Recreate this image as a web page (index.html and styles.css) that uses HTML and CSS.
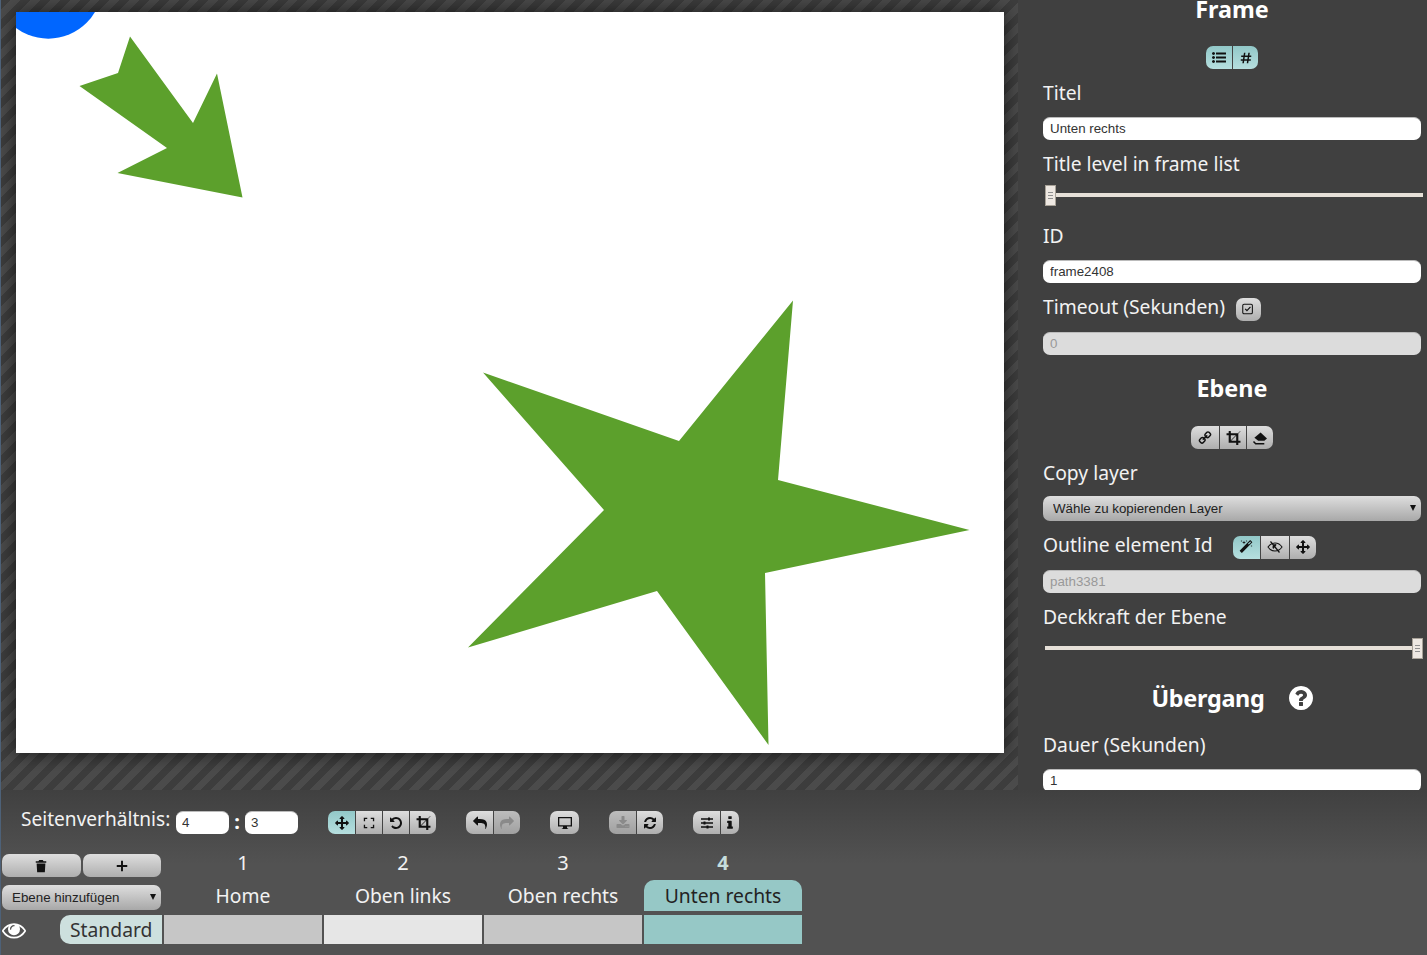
FILE: index.html
```html
<!DOCTYPE html>
<html lang="de">
<head>
    <meta charset="UTF-8">
    <title>Frame Editor</title>
    <link rel="stylesheet" href="styles.css">
</head>
<body>
    <svg class="sprite" xmlns="http://www.w3.org/2000/svg">
        <symbol id="i-list" viewBox="0 0 1792 1792"><path d="M384 1344q0 80-56 136t-136 56-136-56-56-136 56-136 136-56 136 56 56 136zm0-512q0 80-56 136t-136 56-136-56-56-136 56-136 136-56 136 56 56 136zm1408 416v192q0 13-9.5 22.5t-22.5 9.5h-1216q-13 0-22.5-9.5t-9.5-22.5v-192q0-13 9.5-22.5t22.5-9.5h1216q13 0 22.5 9.5t9.5 22.5zm-1408-928q0 80-56 136t-136 56-136-56-56-136 56-136 136-56 136 56 56 136zm1408 416v192q0 13-9.5 22.5t-22.5 9.5h-1216q-13 0-22.5-9.5t-9.5-22.5v-192q0-13 9.5-22.5t22.5-9.5h1216q13 0 22.5 9.5t9.5 22.5zm0-512v192q0 13-9.5 22.5t-22.5 9.5h-1216q-13 0-22.5-9.5t-9.5-22.5v-192q0-13 9.5-22.5t22.5-9.5h1216q13 0 22.5 9.5t9.5 22.5z"/></symbol>
        <symbol id="i-hash" viewBox="0 0 16 16"><path d="M6.5 2L4.7 14M11.5 2L9.7 14M2.5 6H14M2 10.3H13.5" fill="none" stroke="currentColor" stroke-width="1.7"/></symbol>
        <symbol id="i-check" viewBox="0 0 16 16"><rect x="2" y="2.5" width="11" height="11" rx="1.5" fill="none" stroke="currentColor" stroke-width="1.2"/><path d="M4.8 7.8l2 2 4-4.2" fill="none" stroke="currentColor" stroke-width="1.4"/></symbol>
        <symbol id="i-link" viewBox="0 0 1792 1792"><path d="M1520 1216q0-40-28-68l-208-208q-28-28-68-28-42 0-72 32 3 3 19 18.5t21.5 21.5 15 19 13 25.5 3.5 27.5q0 40-28 68t-68 28q-15 0-27.5-3.5t-25.5-13-19-15-21.5-21.5-18.5-19q-33 31-33 73 0 40 28 68l206 207q27 27 68 27 40 0 68-26l147-146q28-28 28-67zm-703-705q0-40-28-68l-206-207q-28-28-68-28-39 0-68 27l-147 146q-28 28-28 67 0 40 28 68l208 208q27 27 68 27 42 0 72-31-3-3-19-18.5t-21.5-21.5-15-19-13-25.5-3.5-27.5q0-40 28-68t68-28q15 0 27.5 3.5t25.5 13 19 15 21.5 21.5 18.5 19q33-31 33-73zm895 705q0 120-85 203l-147 146q-83 83-203 83-121 0-204-85l-206-207q-83-83-83-203 0-123 88-209l-88-88q-86 88-208 88-120 0-204-84l-208-208q-84-84-84-204t85-203l147-146q83-83 203-83 121 0 204 85l206 207q83 83 83 203 0 123-88 209l88 88q86-88 208-88 120 0 204 84l208 208q84 84 84 204z"/></symbol>
        <symbol id="i-crop" viewBox="0 0 1792 1792"><path d="M621 1280h595v-595zm-45-45l595-595h-595v595zm1152 77v192q0 14-9 23t-23 9h-224v224q0 14-9 23t-23 9h-192q-14 0-23-9t-9-23v-224h-864q-14 0-23-9t-9-23v-864h-224q-14 0-23-9t-9-23v-192q0-14 9-23t23-9h224v-224q0-14 9-23t23-9h192q14 0 23 9t9 23v224h851l246-247q10-9 23-9t23 9q9 10 9 23t-9 23l-247 246v851h224q14 0 23 9t9 23z"/></symbol>
        <symbol id="i-eraser" viewBox="0 0 16 16"><path d="M8.6 2.5L15 8.5l-2.6 2.3H6.2L2.4 7.8z"/><path d="M1.5 11.5l2.2 2.2h8.6" fill="none" stroke="currentColor" stroke-width="1.5"/></symbol>
        <symbol id="i-magic" viewBox="0 0 1792 1792"><path d="M1254 581l293-293-107-107-293 293zm447-293q0 27-18 45l-1286 1286q-18 18-45 18t-45-18l-198-198q-18-18-18-45t18-45l1286-1286q18-18 45-18t45 18l198 198q18 18 18 45zm-1351-190l98 30-98 30-30 98-30-98-98-30 98-30 30-98zm350 162l196 60-196 60-60 196-60-196-196-60 196-60 60-196zm930 478l98 30-98 30-30 98-30-98-98-30 98-30 30-98zm-640-640l98 30-98 30-30 98-30-98-98-30 98-30 30-98z"/></symbol>
        <symbol id="i-eye-slash" viewBox="0 0 16 16"><path d="M1 8c1.8-2.7 4.2-4 7-4s5.200 1.300 7 4c-1.800 2.700-4.200 4-7 4s-5.200-1.300-7-4z" fill="none" stroke="currentColor" stroke-width="1.100"/><path d="M5.500 7.800a2.600 2.600 0 0 1 4.200-2.100L6.300 10a2.600 2.600 0 0 1-.8-2.200z"/><path d="M3.500 2.500l9 11" fill="none" stroke="currentColor" stroke-width="1.200"/></symbol>
        <symbol id="i-move" viewBox="0 0 1792 1792"><path d="M1792 896q0 26-19 45l-256 256q-19 19-45 19t-45-19-19-45v-128h-384v384h128q26 0 45 19t19 45-19 45l-256 256q-19 19-45 19t-45-19l-256-256q-19-19-19-45t19-45 45-19h128v-384h-384v128q0 26-19 45t-45 19-45-19l-256-256q-19-19-19-45t19-45l256-256q19-19 45-19t45 19 19 45v128h384v-384h-128q-26 0-45-19t-19-45 19-45l256-256q19-19 45-19t45 19l256 256q19 19 19 45t-19 45-45 19h-128v384h384v-128q0-26 19-45t45-19 45 19l256 256q19 19 19 45z"/></symbol>
        <symbol id="i-corners" viewBox="0 0 16 16"><path d="M2.800 6V2.800H6M10 2.800h3.200V6M13.200 10v3.200H10M6 13.200H2.800V10" fill="none" stroke="currentColor" stroke-width="1.500"/></symbol>
        <symbol id="i-rotate" viewBox="0 0 1792 1792"><path d="M1664 896q0 156-61 298t-164 245-245 164-298 61q-172 0-327-72.500t-264-204.500q-7-10-6.500-22.500t8.500-20.500l137-138q10-9 25-9 16 2 23 12 73 95 179 147t225 52q104 0 198.500-40.500t163.500-109.500 109.500-163.500 40.500-198.500-40.500-198.500-109.500-163.500-163.500-109.500-198.500-40.500q-98 0-188 35.500t-160 101.500l137 138q31 30 14 69-17 40-59 40h-448q-26 0-45-19t-19-45v-448q0-42 40-59 39-17 69 14l130 129q107-101 244.500-156.500t284.500-55.500q156 0 298 61t245 164 164 245 61 298z"/></symbol>
        <symbol id="i-reply" viewBox="0 0 1792 1792"><path d="M1792 1120q0 166-127 451-3 7-10.500 24t-13.500 30-13 22q-12 17-28 17-15 0-23.500-10t-8.500-25q0-9 2.500-26.500t2.500-23.500q5-68 5-123 0-101-17.500-181t-48.500-138.500-80-101-105.500-69.500-133-42.500-154-21.500-175.500-6h-224v256q0 26-19 45t-45 19-45-19l-512-512q-19-19-19-45t19-45l512-512q19-19 45-19t45 19 19 45v256h224q713 0 875 403 53 134 53 333z"/></symbol>
        <symbol id="i-desktop" viewBox="0 0 16 16"><path fill-rule="evenodd" d="M1 2h14v9.500H10v1.500l1.500 1H4.500L6 13v-1.500H1zM2.300 3.300v6.900h11.400V3.300z"/></symbol>
        <symbol id="i-download" viewBox="0 0 1792 1792"><path d="M1344 1344q0-26-19-45t-45-19-45 19-19 45 19 45 45 19 45-19 19-45zm256 0q0-26-19-45t-45-19-45 19-19 45 19 45 45 19 45-19 19-45zm128-224v320q0 40-28 68t-68 28h-1472q-40 0-68-28t-28-68v-320q0-40 28-68t68-28h465l135 136q58 56 136 56t136-56l136-136h464q40 0 68 28t28 68zm-325-569q17 41-14 70l-448 448q-18 19-45 19t-45-19l-448-448q-31-29-14-70 17-39 59-39h256v-448q0-26 19-45t45-19h256q26 0 45 19t19 45v448h256q42 0 59 39z"/></symbol>
        <symbol id="i-refresh" viewBox="0 0 1792 1792"><path d="M1639 1056q0 5-1 7-64 268-268 434.500t-478 166.500q-146 0-282.500-55t-243.500-157l-129 129q-19 19-45 19t-45-19-19-45v-448q0-26 19-45t45-19h448q26 0 45 19t19 45-19 45l-137 137q71 66 161 102t187 36q134 0 250-65t186-179q11-17 53-117 8-23 30-23h192q13 0 22.500 9.500t9.500 22.500zm25-800v448q0 26-19 45t-45 19h-448q-26 0-45-19t-19-45 19-45l138-138q-148-137-349-137-134 0-250 65t-186 179q-11 17-53 117-8 23-30 23h-199q-13 0-22.500-9.500t-9.500-22.500v-7q65-268 270-434.500t480-166.500q146 0 284 55.500t245 156.500l130-129q19-19 45-19t45 19 19 45z"/></symbol>
        <symbol id="i-sliders" viewBox="0 0 16 16"><path d="M2 4h12M2 8h12M2 12h12" fill="none" stroke="currentColor" stroke-width="1.400"/><path d="M9 2.500h2v3H9zM4.500 6.500h2v3h-2zM7.500 10.500h2v3h-2z"/></symbol>
        <symbol id="i-info" viewBox="0 0 1792 1792"><path d="M1216 1344v128q0 26-19 45t-45 19h-512q-26 0-45-19t-19-45v-128q0-26 19-45t45-19h64v-384h-64q-26 0-45-19t-19-45v-128q0-26 19-45t45-19h384q26 0 45 19t19 45v576h64q26 0 45 19t19 45zm-128-1152v192q0 26-19 45t-45 19h-256q-26 0-45-19t-19-45v-192q0-26 19-45t45-19h256q26 0 45 19t19 45z"/></symbol>
        <symbol id="i-trash" viewBox="0 0 16 16"><path d="M6 1h4l1 1.700h3V4.300H2V2.700h3zM3 5.200h10l-.6 9.800H3.600z"/></symbol>
        <symbol id="i-plus" viewBox="0 0 16 16"><path d="M8 2v12M2 8h12" fill="none" stroke="currentColor" stroke-width="2.200"/></symbol>
        <symbol id="i-eye" viewBox="0 0 1792 1792"><path d="M1664 960q-152-236-381-353 61 104 61 225 0 185-131.500 316.500t-316.500 131.500-316.500-131.500-131.500-316.500q0-121 61-225-229 117-381 353 133 205 333.500 326.500t434.500 121.500 434.500-121.500 333.500-326.500zm-720-384q0-20-14-34t-34-14q-125 0-214.500 89.500t-89.500 214.500q0 20 14 34t34 14 34-14 14-34q0-86 61-147t147-61q20 0 34-14t14-34zm848 384q0 34-20 69-140 230-376.500 368.500t-499.500 138.500-499.500-139-376.500-368q-20-35-20-69t20-69q140-229 376.500-368t499.500-139 499.500 139 376.500 368q20 35 20 69z"/></symbol>
        <symbol id="i-help" viewBox="128 128 1536 1536"><path d="M1024 1376v-192q0-14-9-23t-23-9h-192q-14 0-23 9t-9 23v192q0 14 9 23t23 9h192q14 0 23-9t9-23zm256-672q0-88-55.500-163t-138.500-116-170-41q-243 0-371 213-15 24 8 42l132 100q7 6 19 6 16 0 25-12 53-68 86-92 34-24 86-24 48 0 85.500 26t37.500 59q0 38-20 61t-68 45q-63 28-115.500 86.500t-52.500 125.500v36q0 14 9 23t23 9h192q14 0 23-9t9-23q0-19 21.500-49.500t54.500-49.500q32-18 49-28.500t46-35 44.500-48 28-60.500 12.500-81zm384 192q0 209-103 385.500t-279.500 279.500-385.500 103-385.500-103-279.500-279.500-103-385.500 103-385.500 279.500-279.500 385.500-103 385.500 103 279.500 279.500 103 385.500z"/></symbol>
    </svg>

    <div class="app">
        <div class="workspace">
            <div class="stage">
                <div class="page">
                    <!-- frame content, in screen coordinates -->
                    <svg class="drawing" viewBox="16 12 988 741" xmlns="http://www.w3.org/2000/svg">
                        <circle cx="48.3" cy="-15.5" r="54.2" fill="#0066ff"/>
                        <polygon fill="#5ca02c" points="130,36.500 193,123 217,73.500 242.500,197.500 117.500,173 167,148 79.500,86 118,73"/>
                        <polygon fill="#5ca02c" points="793,300.500 778,480 969.500,530 765,573 768.500,745 657,591 468,647.500 604,510 483,372.500 679,441"/>
                    </svg>
                </div>
            </div>

            <aside class="panel">
                <h2 class="panel-title">Frame</h2>
                <div class="btn-group center gap-after">
                    <button class="btn active w26"><svg class="icon"><use href="#i-list"/></svg></button>
                    <button class="btn active w26"><svg class="icon"><use href="#i-hash"/></svg></button>
                </div>

                <label class="field-label">Titel</label>
                <input class="text-input" type="text" value="Unten rechts">

                <label class="field-label tight">Title level in frame list</label>
                <div class="slider"><span class="slider-handle"></span></div>

                <label class="field-label">ID</label>
                <input class="text-input" type="text" value="frame2408">

                <div class="label-row timeout-row">
                    <label class="field-label">Timeout (Sekunden)</label>
                    <button class="btn solo check"><svg class="icon"><use href="#i-check"/></svg></button>
                </div>
                <input class="text-input" type="text" value="0" disabled>

                <h2 class="panel-title ebene">Ebene</h2>
                <div class="btn-group center gap-after">
                    <button class="btn w28"><svg class="icon flip"><use href="#i-link"/></svg></button>
                    <button class="btn"><svg class="icon mid"><use href="#i-crop"/></svg></button>
                    <button class="btn"><svg class="icon big"><use href="#i-eraser"/></svg></button>
                </div>

                <label class="field-label tight-select">Copy layer</label>
                <div class="select-box panel-select">
                    <select><option>Wähle zu kopierenden Layer</option></select>
                </div>

                <div class="label-row">
                    <label class="field-label">Outline element Id</label>
                    <div class="btn-group">
                        <button class="btn active"><svg class="icon"><use href="#i-magic"/></svg></button>
                        <button class="btn w29"><svg class="icon big"><use href="#i-eye-slash"/></svg></button>
                        <button class="btn"><svg class="icon"><use href="#i-move"/></svg></button>
                    </div>
                </div>
                <input class="text-input" type="text" value="path3381" disabled>

                <label class="field-label tight">Deckkraft der Ebene</label>
                <div class="slider full"><span class="slider-handle"></span></div>

                <h2 class="panel-title uebergang">Übergang <svg class="help"><use href="#i-help"/></svg></h2>

                <label class="field-label">Dauer (Sekunden)</label>
                <input class="text-input" type="text" value="1">
            </aside>
        </div>

        <div class="bottom">
            <div class="toolbar">
                <span class="ratio-label">Seitenverhältnis:</span>
                <input class="text-input ratio" type="text" value="4">
                <span class="ratio-sep">:</span>
                <input class="text-input ratio" type="text" value="3">

                <div class="btn-group">
                    <button class="btn active"><svg class="icon"><use href="#i-move"/></svg></button>
                    <button class="btn"><svg class="icon"><use href="#i-corners"/></svg></button>
                    <button class="btn"><svg class="icon"><use href="#i-rotate"/></svg></button>
                    <button class="btn"><svg class="icon mid"><use href="#i-crop"/></svg></button>
                </div>
                <div class="btn-group">
                    <button class="btn"><svg class="icon"><use href="#i-reply"/></svg></button>
                    <button class="btn disabled"><svg class="icon flip"><use href="#i-reply"/></svg></button>
                </div>
                <div class="btn-group">
                    <button class="btn solo"><svg class="icon big"><use href="#i-desktop"/></svg></button>
                </div>
                <div class="btn-group">
                    <button class="btn disabled"><svg class="icon"><use href="#i-download"/></svg></button>
                    <button class="btn"><svg class="icon"><use href="#i-refresh"/></svg></button>
                </div>
                <div class="btn-group">
                    <button class="btn"><svg class="icon big"><use href="#i-sliders"/></svg></button>
                    <button class="btn narrow"><svg class="icon big"><use href="#i-info"/></svg></button>
                </div>
            </div>

            <div class="timeline">
                <div class="layer-actions">
                    <button class="btn plain"><svg class="icon"><use href="#i-trash"/></svg></button>
                    <button class="btn plain"><svg class="icon"><use href="#i-plus"/></svg></button>
                </div>
                <div class="frame-num">1</div>
                <div class="frame-num">2</div>
                <div class="frame-num">3</div>
                <div class="frame-num current">4</div>

                <div class="select-box add-layer">
                    <select><option>Ebene hinzufügen</option></select>
                </div>
                <div class="frame-title">Home</div>
                <div class="frame-title">Oben links</div>
                <div class="frame-title">Oben rechts</div>
                <div class="frame-title current">Unten rechts</div>

                <div class="layer-head">
                    <svg class="eye"><use href="#i-eye"/></svg>
                    <span class="layer-name">Standard</span>
                </div>
                <div class="cell"></div>
                <div class="cell light"></div>
                <div class="cell"></div>
                <div class="cell current"></div>
            </div>
        </div>
    </div>
</body>
</html>
```

FILE: styles.css
```css
body {
    margin: 0;
    height: 955px;
    overflow: hidden;
    background: #505050;
    font-family: "Noto Sans", sans-serif;
    color: #fff;
}

.sprite {
    display: none;
}

.app {
    border-left: 1px solid #4d6178;
    height: 955px;
}

.workspace {
    display: flex;
    height: 790px;
    background: #404040;
}

/* canvas */

.stage {
    width: 1017px;
    height: 790px;
    padding: 12px 0 0 15px;
    box-sizing: border-box;
    overflow: hidden;
    background: repeating-linear-gradient(135deg, #3d3d3d 0, #3d3d3d 7px, #4b4b4b 7px, #4b4b4b 14px);
}

.page {
    width: 988px;
    height: 741px;
    background: #fff;
    box-shadow: 0 0 18px rgba(0, 0, 0, 0.65);
}

.drawing {
    display: block;
    width: 988px;
    height: 741px;
}

/* right panel */

.panel {
    flex: 1;
    height: 790px;
    padding: 0 6px 0 25px;
    box-sizing: border-box;
    overflow: hidden;
}

.panel-title {
    margin: -10px 0 16px;
    height: 40px;
    line-height: 38px;
    font-size: 23.4px;
    font-weight: 700;
    text-align: center;
}

.panel-title.ebene {
    margin: 14px 0 17px;
}

.panel-title.uebergang {
    margin: 19px 0 13px;
    display: flex;
    justify-content: center;
    align-items: center;
    gap: 24px;
    letter-spacing: -0.3px;
}

.help {
    width: 24px;
    height: 24px;
    fill: #fff;
}

.field-label {
    display: block;
    height: 28px;
    line-height: 28px;
    margin-bottom: 10px;
    font-size: 19.3px;
    color: #f2f2f2;
}

.field-label.tight {
    margin-bottom: 7px;
}

.field-label.tight-select {
    margin-bottom: 9px;
}

.label-row {
    display: flex;
    align-items: center;
    margin-bottom: 11px;
}

.label-row .field-label {
    margin-bottom: 0;
}

.label-row .btn-group,
.label-row .btn.check {
    margin-left: 20px;
    margin-top: 4px;
}

.timeout-row .btn.check {
    margin-left: 11px;
}

.text-input {
    display: block;
    width: 378px;
    height: 23px;
    margin: 0 0 10px;
    padding: 0 7px 2px;
    box-sizing: border-box;
    border: 0;
    border-top: 1px solid #bbb;
    border-radius: 7px;
    background: #fff;
    color: #333;
    font-family: "Liberation Sans", sans-serif;
    font-size: 13.33px;
}

.text-input:disabled {
    background: #dcdcdc;
    color: #999;
}

.slider {
    position: relative;
    height: 21px;
    margin: 0 -2px 16px 2px;
}

.slider::before {
    content: "";
    position: absolute;
    left: 0;
    right: 0;
    top: 8px;
    height: 4px;
    background: #e6e0d8;
}

.slider-handle {
    position: absolute;
    left: 0;
    top: 0;
    width: 9px;
    height: 19px;
    border: 1px solid #a8a298;
    background: repeating-linear-gradient(#8f8f8f 0, #8f8f8f 1px, #eee8e2 1px, #eee8e2 3px) center / 5px 7px no-repeat #eee8e2;
}

.slider.full .slider-handle {
    left: auto;
    right: 0;
}

/* buttons */

.btn-group {
    display: flex;
    width: max-content;
}

.btn-group.center {
    margin-left: auto;
    margin-right: auto;
}

.btn-group.gap-after {
    margin-bottom: 10px;
}

.btn {
    display: flex;
    align-items: center;
    justify-content: center;
    width: 27px;
    height: 23px;
    padding: 0;
    border: 0;
    box-sizing: border-box;
    background: linear-gradient(#dedede, #aeaeae);
    color: #111;
}

.btn + .btn {
    border-left: 1px solid #444;
}

.btn-group .btn:first-child {
    border-radius: 7px 0 0 7px;
}

.btn-group .btn:last-child {
    border-radius: 0 7px 7px 0;
}

.btn-group .btn.solo,
.btn.solo {
    width: 29px;
    border-radius: 7px;
}

.btn.check {
    width: 25px;
}

.btn.active {
    background: linear-gradient(#92c8c8, #b6dfdf);
}

.btn.w26 {
    width: 26px;
}

.btn.w28 {
    width: 28px;
}

.btn.w29 {
    width: 29px;
}

.btn.narrow {
    width: 19px;
}

.btn.disabled {
    color: #8a8a8a;
    background: linear-gradient(#bdbdbd, #a0a0a0);
}

.icon {
    width: 14px;
    height: 14px;
    fill: currentColor;
}

.icon.mid {
    width: 15px;
    height: 15px;
}

.icon.big {
    width: 16px;
    height: 16px;
}

.icon.flip {
    transform: scaleX(-1);
}

/* bottom area */

.bottom {
    height: 165px;
    background: linear-gradient(#404040, #525252 45%);
}

.toolbar {
    display: flex;
    align-items: center;
    height: 23px;
    padding: 21px 0 0 20px;
}

.ratio-label {
    width: 155px;
    margin-top: -7px;
    font-size: 19.1px;
    white-space: nowrap;
    color: #f2f2f2;
}

.text-input.ratio {
    width: 53px;
    margin: 0;
    padding-left: 6px;
}

.ratio-sep {
    width: 16px;
    margin-top: -3px;
    text-align: center;
    font-size: 20px;
    font-weight: 700;
}

.toolbar .btn-group {
    margin-left: 30px;
}

.timeline {
    display: grid;
    grid-template-columns: 160px repeat(4, 158px);
    grid-template-rows: 31px 31px 29px;
    column-gap: 2px;
    margin: 20px 0 0 1px;
}

.layer-actions {
    display: flex;
    gap: 2px;
    width: 159px;
    height: 23px;
}

.btn.plain {
    flex: 1;
    border-left: 0;
    border-radius: 7px;
}

.frame-num {
    height: 23px;
    line-height: 17px;
    text-align: center;
    font-size: 20px;
    color: #f2f2f2;
}

.frame-num.current {
    font-weight: 700;
    color: #c5dedd;
}

.frame-title {
    height: 31px;
    margin-top: -5px;
    line-height: 31px;
    text-align: center;
    font-size: 19.3px;
    color: #f2f2f2;
}

.frame-title.current {
    background: #96c8c6;
    border-radius: 10px 10px 0 0;
    color: #222;
}

.select-box {
    position: relative;
}

.select-box select {
    display: block;
    width: 100%;
    height: 100%;
    padding: 0 10px;
    border: 0;
    border-radius: 7px;
    appearance: none;
    background: linear-gradient(#dedede, #a8a8a8);
    color: #222;
    font-family: "Liberation Sans", sans-serif;
    font-size: 13.33px;
}

/* arrow of the dropdown */
.select-box::after {
    content: "";
    position: absolute;
    right: 5px;
    top: 9px;
    border-left: 3.5px solid transparent;
    border-right: 3.5px solid transparent;
    border-top: 6px solid #111;
    pointer-events: none;
}

.panel-select {
    height: 25px;
    margin-bottom: 10px;
}

.add-layer {
    width: 159px;
    height: 25px;
}

.layer-head {
    display: flex;
    align-items: center;
    justify-content: space-between;
    margin-top: -1px;
    height: 29px;
}

.eye {
    width: 24px;
    height: 24px;
    fill: #fff;
}

.layer-name {
    display: block;
    width: 102px;
    height: 29px;
    line-height: 29px;
    padding-left: 10px;
    box-sizing: border-box;
    border-radius: 10px 0 0 10px;
    background: #cde0de;
    color: #333;
    font-size: 19.3px;
}

.cell {
    height: 29px;
    margin-top: -1px;
    background: #c6c6c6;
}

.cell.light {
    background: #e6e6e6;
}

.cell.current {
    background: #96c8c6;
}
```
